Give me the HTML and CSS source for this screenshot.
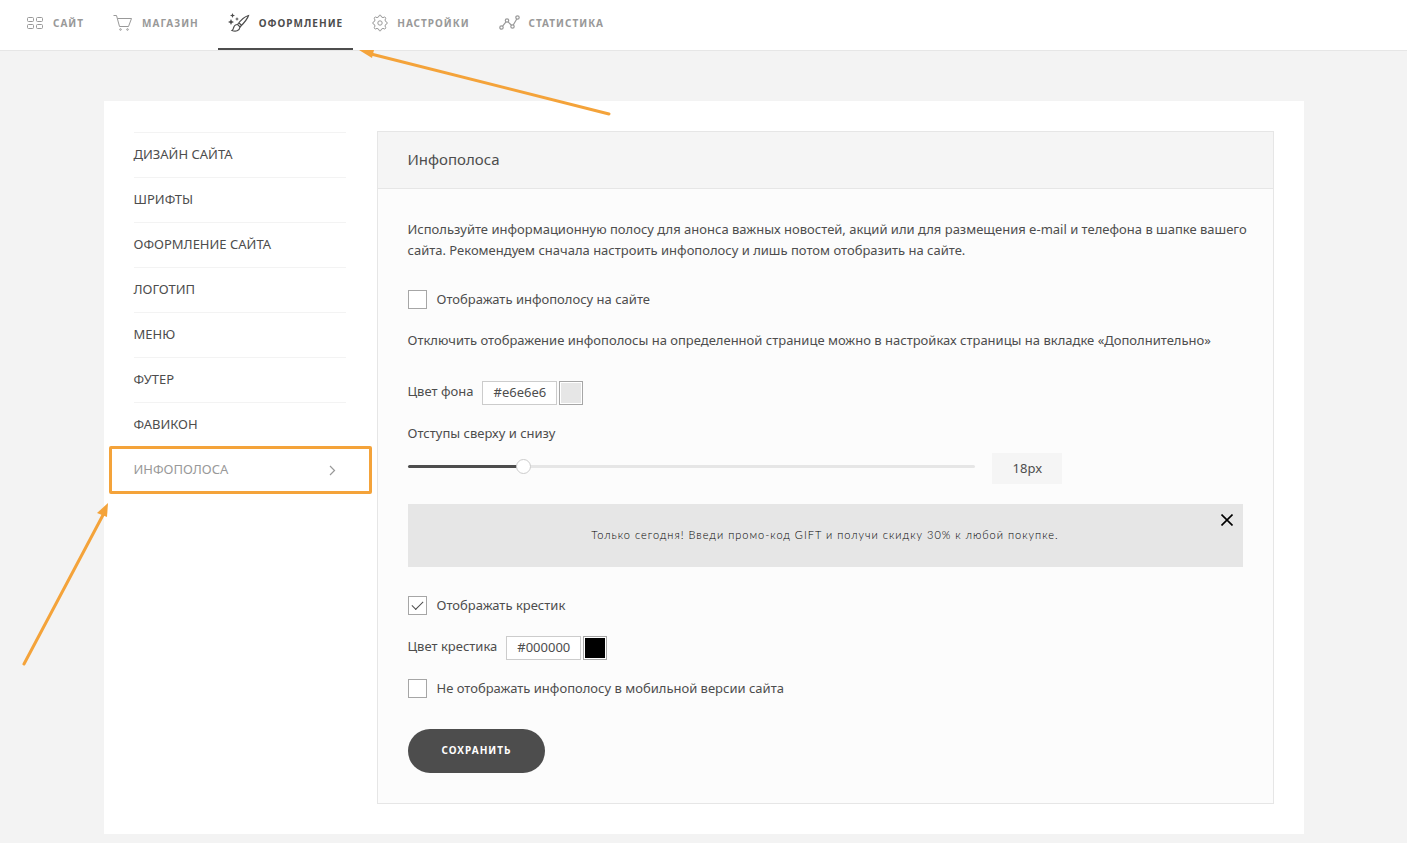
FILE: index.html
```html
<!DOCTYPE html>
<html lang="ru">
<head>
<meta charset="UTF-8" />
<meta name="viewport" content="width=device-width, initial-scale=1.0" />
<title>Инфополоса</title>
<link rel="stylesheet" href="styles.css">
</head>
<body>

<header class="topbar">
  <nav class="topnav">
    <a class="topnav-link" href="#">
      <svg width="18" height="14" viewBox="0 0 18 14" fill="none" stroke="currentColor"><rect x="1.5" y="1.5" width="6" height="4" rx="1"/><rect x="10.500" y="1.5" width="6" height="4" rx="1"/><rect x="1.5" y="8.500" width="6" height="4" rx="1"/><rect x="10.500" y="8.500" width="6" height="4" rx="1"/></svg>
      Сайт
    </a>
    <a class="topnav-link" href="#">
      <svg width="20" height="18" viewBox="0 0 20 18" fill="none" stroke="currentColor"><path d="M0.500 1.500H3.500L6.500 12.500H15.500L18.500 4.500H4.500"/><circle cx="7.500" cy="15.500" r="0.800"/><circle cx="14.500" cy="15.500" r="0.800"/></svg>
      Магазин
    </a>
    <a class="topnav-link active" href="#">
      <svg width="22" height="20" viewBox="0 0 22 20" fill="none" stroke="currentColor" stroke-width="1.200"><path d="M20.500 2.500C17 3.500 12.500 7.500 9.500 11.500L12 14C15.500 10.500 19.500 6 20.500 2.500Z"/><path d="M9.500 11.500C7 11.500 6 13 5.500 15C5.300 16.200 4.800 17 4 17.500C7.500 19 11.500 18 12 14M11 10L13.500 12.300"/><path fill="currentColor" stroke="none" d="M4.500 0L5.200 1.800L7 2.500L5.200 3.200L4.500 5L3.800 3.200L2 2.500L3.800 1.800ZM9 4L9.600 5.400L11 6L9.600 6.600L9 8L8.400 6.600L7 6L8.400 5.400ZM3 6L3.900 8.100L6 9L3.900 9.900L3 12L2.100 9.900L0 9L2.100 8.100Z"/></svg>
      Оформление
      <!-- Стрелка к активному разделу -->
      <svg class="arrow arrow-top" width="256" height="68" viewBox="0 0 256 68"><path d="M12 4L250 64" stroke="#f4a33a" stroke-width="3" stroke-linecap="round"/><path d="M0 0H15L13 8Z" fill="#f4a33a"/></svg>
    </a>
    <a class="topnav-link" href="#">
      <svg width="16" height="18" viewBox="0 0 16 18" fill="none" stroke="currentColor"><path d="M6.500 3Q7 1 8 1T9.500 3L11 3.600Q13 2.500 13.500 3.500Q14.200 4.200 13 6L13.600 7.500Q15.300 8 15.300 9T13.600 10.500L13 12Q14.200 13.800 13.500 14.500Q13 15.500 11 14.400L9.500 15Q9 17 8 17T6.500 15L5 14.400Q3 15.500 2.500 14.500Q1.800 13.800 3 12L2.400 10.500Q.7 10 .7 9T2.400 7.500L3 6Q1.800 4.200 2.500 3.500Q3 2.500 5 3.600Z"/><circle cx="8" cy="9" r="2.200"/></svg>
      Настройки
    </a>
    <a class="topnav-link" href="#">
      <svg width="21" height="16" viewBox="0 0 21 16" fill="none" stroke="currentColor" stroke-width="1.200"><circle cx="2.500" cy="12.500" r="1.700"/><circle cx="8" cy="5.500" r="1.700"/><circle cx="13.500" cy="11.500" r="1.700"/><circle cx="18.500" cy="2.500" r="1.700"/><path d="M3.600 11.200L7 6.900M9 6.900L12.500 10.200M14.200 10L17.800 4"/></svg>
      Статистика
    </a>
  </nav>
</header>

<main class="container">
  <!-- Боковое меню -->
  <nav class="sidebar">
    <a class="sidebar-link" href="#">Дизайн сайта</a>
    <a class="sidebar-link" href="#">Шрифты</a>
    <a class="sidebar-link" href="#">Оформление сайта</a>
    <a class="sidebar-link" href="#">Логотип</a>
    <a class="sidebar-link" href="#">Меню</a>
    <a class="sidebar-link" href="#">Футер</a>
    <a class="sidebar-link" href="#">Фавикон</a>
    <a class="sidebar-link selected" href="#">
      Инфополоса
      <svg class="chevron" width="7" height="11" viewBox="0 0 7 11" fill="none" stroke="currentColor" stroke-width="1.200"><path d="M1 1L5.500 5.500L1 10"/></svg>
      <svg class="arrow arrow-side" width="88" height="164" viewBox="0 0 88 164"><path d="M2 161L81 12" stroke="#f4a33a" stroke-width="3" stroke-linecap="round"/><path d="M86 0L75 10L85 14Z" fill="#f4a33a"/></svg>
    </a>
  </nav>

  <!-- Настройки инфополосы -->
  <section class="panel">
    <h1 class="panel-title">Инфополоса</h1>
    <form class="panel-body">
      <p class="text intro">Используйте информационную полосу для анонса важных новостей, акций или для размещения e-mail и телефона в шапке вашего сайта. Рекомендуем сначала настроить инфополосу и лишь потом отобразить на сайте.</p>

      <label class="check"><input type="checkbox" class="checkbox">Отображать инфополосу на сайте</label>

      <p class="text note">Отключить отображение инфополосы на определенной странице можно в настройках страницы на вкладке «Дополнительно»</p>

      <div class="color-row">
        <label for="bgColor">Цвет фона</label>
        <input type="text" class="color-text" id="bgColor" value="#e6e6e6">
        <input type="color" class="color-swatch" aria-label="Выбрать цвет фона" value="#e6e6e6">
      </div>

      <label class="range-label" for="indent">Отступы сверху и снизу</label>
      <div class="range-row">
        <input type="range" class="range" id="indent" min="0" max="92" value="18">
        <output class="range-value" for="indent">18px</output>
      </div>

      <div class="infobar">
        Только сегодня! Введи промо-код GIFT и получи скидку 30% к любой покупке.
        <button type="button" class="infobar-close" aria-label="Закрыть">
          <svg width="12" height="12" viewBox="0 0 12 12" stroke="#000" stroke-width="1.600"><path d="M.5 .5L11.500 11.500M11.500 .5L.5 11.500"/></svg>
        </button>
      </div>

      <label class="check"><input type="checkbox" class="checkbox" checked>Отображать крестик</label>

      <div class="color-row cross-color">
        <label for="crossColor">Цвет крестика</label>
        <input type="text" class="color-text" id="crossColor" value="#000000">
        <input type="color" class="color-swatch" aria-label="Выбрать цвет крестика" value="#000000">
      </div>

      <label class="check">
        <input type="checkbox" class="checkbox">Не отображать инфополосу в мобильной версии сайта
      </label>

      <button type="submit" class="save">Сохранить</button>
    </form>
  </section>
</main>

</body>
</html>
```
FILE: styles.css
```css
* {
  box-sizing: border-box;
}
body {
  margin: 0;
  background-color: #f3f3f3;
  color: #4d4d4d;
  font-family: "Noto Sans", "Open Sans", sans-serif;
  font-size: 13px;
  line-height: 21px;
}
a {
  color: inherit;
  text-decoration: none;
}

/* Верхнее меню */
.topbar {
  background-color: #fff;
  border-bottom: 1px solid #e6e6e6;
}
.topnav {
  display: flex;
  gap: 9px;
  padding-left: 16px;
}
.topnav-link {
  position: relative;
  display: flex;
  align-items: center;
  gap: 9px;
  height: 50px;
  padding: 0 10px 2px;
  border-bottom: 2px solid transparent;
  color: #999;
  font-size: 10px;
  font-weight: 700;
  letter-spacing: 1px;
  text-transform: uppercase;
}
.topnav-link.active {
  color: #4d4d4d;
  border-bottom-color: #4d4d4d;
}

/* Стрелки-подсказки */
.arrow {
  position: absolute;
  pointer-events: none;
}
.arrow-top {
  top: 50px;
  left: calc(100% + 6px);
  z-index: 1;
}
.arrow-side {
  top: 55px;
  right: calc(100% + 24px);
}

.container {
  display: grid;
  grid-template-columns: 212px 1fr;
  gap: 31px;
  max-width: 1200px;
  margin: 50px auto 9px;
  padding: 30px;
  background-color: #fff;
}

/* Боковое меню */
.sidebar {
  padding-top: 1px;
}
.sidebar-link {
  position: relative;
  display: flex;
  align-items: center;
  justify-content: space-between;
  height: 45px;
  padding: 0 10px 2px 0;
  border-top: 1px solid #f3f3f3;
  text-transform: uppercase;
}
.sidebar-link.selected {
  color: #999;
}
.chevron {
  margin-top: 2px;
}
.sidebar-link.selected::before {
  content: "";
  position: absolute;
  inset: -2px -26px -2px -25px;
  border: 3px solid #f4a33a;
  border-radius: 2px;
}

/* Панель настроек */
.panel {
  border: 1px solid #e6e6e6;
  background-color: #fcfcfc;
}
.panel-title {
  margin: 0;
  padding: 17px 30px 18px;
  border-bottom: 1px solid #e6e6e6;
  background-color: #f5f5f5;
  font-size: 15px;
  font-weight: 400;
}
.panel-body {
  padding: 30px;
}
.text {
  margin: 0;
}
.intro {
  margin: 0 -15px 28px 0;
}
.note {
  margin: 20px 0 30px;
}
.check {
  display: flex;
  align-items: center;
  gap: 10px;
}
.checkbox {
  appearance: none;
  width: 19px;
  height: 19px;
  margin: 0;
  border: 1px solid #a6a6a6;
  background-color: #fff;
}
.checkbox:checked::before {
  content: "";
  display: block;
  width: 10px;
  height: 5px;
  margin: 4px 0 0 3px;
  border-left: 1px solid #4d4d4d;
  border-bottom: 1px solid #4d4d4d;
  transform: rotate(-45deg);
}
.color-row {
  display: flex;
  margin-bottom: 18px;
}
.cross-color {
  margin-top: 20px;
}
.color-text {
  width: 75px;
  height: 24px;
  margin: 0 2px 0 9px;
  padding: 0 0 2px;
  border: 1px solid #ccc;
  background-color: #fff;
  color: #4d4d4d;
  font: inherit;
  text-align: center;
}
.color-swatch {
  appearance: none;
  width: 24px;
  height: 24px;
  padding: 1px;
  border: 1px solid #a6a6a6;
  background-color: #fff;
}
.color-swatch::-webkit-color-swatch-wrapper {
  padding: 0;
}
.color-swatch::-webkit-color-swatch {
  border: none;
}
.range-label {
  display: block;
  margin-bottom: 9px;
}
.range-row {
  display: flex;
  gap: 17px;
}
.range {
  appearance: none;
  width: 68%;
  height: 27px;
  margin: 0;
  background: none;
}
.range::-webkit-slider-runnable-track {
  height: 3px;
  border-radius: 2px;
  background: linear-gradient(to right, #4d4d4d 20%, #e6e6e6 20%);
}
.range::-webkit-slider-thumb {
  appearance: none;
  width: 15px;
  height: 15px;
  margin-top: -6px;
  border: 1px solid #ccc;
  border-radius: 50%;
  background-color: #fff;
}
.range-value {
  width: 70px;
  height: 31px;
  background-color: #f5f5f5;
  line-height: 31px;
  text-align: center;
}

/* Предпросмотр полосы */
.infobar {
  position: relative;
  margin: 20px 0 28px;
  padding: 20px 30px 22px;
  background-color: #e6e6e6;
  color: #000;
  font-family: Lato, sans-serif;
  font-size: 11px;
  font-weight: 300;
  letter-spacing: 1px;
  text-align: center;
}
.infobar-close {
  position: absolute;
  top: 10px;
  right: 10px;
  display: flex;
  padding: 0;
  border: none;
  background: none;
  cursor: pointer;
}
.save {
  height: 44px;
  margin-top: 30px;
  padding: 0 34px 2px;
  border: none;
  border-radius: 22px;
  background-color: #4d4d4d;
  color: #fff;
  font-family: inherit;
  font-size: 10px;
  font-weight: 700;
  letter-spacing: 1px;
  text-transform: uppercase;
  cursor: pointer;
}
.save:hover {
  background-color: #333;
}
```
